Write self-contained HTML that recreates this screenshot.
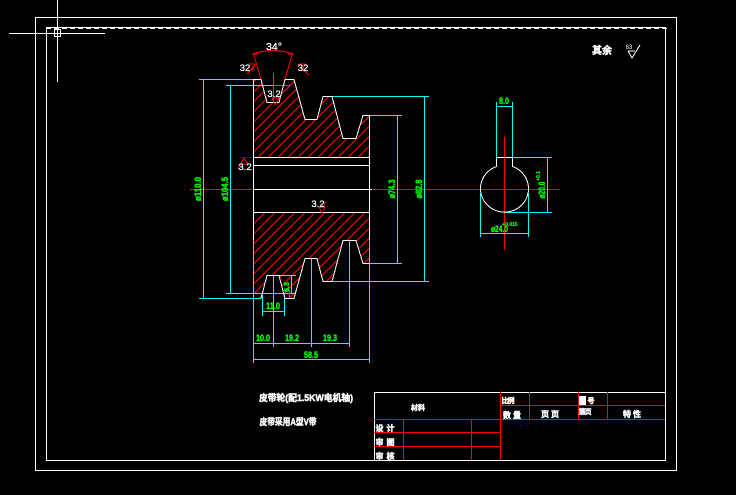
<!DOCTYPE html>
<html><head><meta charset="utf-8"><style>
html,body{margin:0;padding:0;background:#000;width:736px;height:495px;overflow:hidden}
svg{display:block}
text{font-family:"Liberation Sans","Noto Sans CJK SC",sans-serif}
.g{fill:#0f0;stroke:#0f0;stroke-width:.35;font-size:9px;font-weight:bold;text-anchor:middle}
.w{fill:#fff;stroke:#fff;stroke-width:.25;font-size:9.5px;text-anchor:middle}
.c{fill:#fff;stroke:#fff;stroke-width:.45;font-size:8px;font-weight:bold;text-anchor:middle}
</style></head><body>
<svg width="736" height="495" viewBox="0 0 736 495" xmlns="http://www.w3.org/2000/svg">
<defs>
<clipPath id="t"><polygon points="253,79 261,79 267,102 279,102 285,79 294,79 305,119 317,119 323,96 332,96 343,138 356,138 363,115 369,115 369,157 253,157"/></clipPath>
<clipPath id="b"><polygon points="253,212 369,212 369,263 363,263 356,240 343,240 332,281 323,281 317,258 305,258 294,298 285,298 279,275 267,275 261,298 253,298"/></clipPath>
<path id="hl" d="M285.5 50l-270 270m280-270l-270 270m280-270l-270 270m280-270l-270 270m280-270l-270 270m280-270l-270 270m280-270l-270 270m280-270l-270 270m280-270l-270 270m280-270l-270 270m280-270l-270 270m280-270l-270 270m280-270l-270 270m280-270l-270 270m280-270l-270 270m280-270l-270 270m280-270l-270 270m280-270l-270 270m280-270l-270 270m280-270l-270 270m280-270l-270 270m280-270l-270 270m280-270l-270 270m280-270l-270 270m280-270l-270 270m280-270l-270 270m280-270l-270 270m280-270l-270 270m280-270l-270 270m280-270l-270 270m280-270l-270 270m280-270l-270 270m280-270l-270 270m280-270l-270 270"/>
</defs>
<rect width="736" height="495" fill="#000"/>
<g shape-rendering="crispEdges" fill="none" stroke-width="1">
<!-- frames -->
<g stroke="#fff">
<path d="M35.5 17.5H676.5V470.5H35.5Z"/>
<path d="M46.5 27.5H665.5V460.5H46.5Z"/>
<path d="M46 28.5H667" stroke-dasharray="5 3"/>
<path d="M9 33.5H105M57.5 0V82"/>
<path d="M54.5 29.5H60.5V36.5H54.5Z"/>
</g>
<!-- hatching -->
<g clip-path="url(#t)"><use href="#hl" stroke="#f00"/></g>
<g clip-path="url(#b)"><use href="#hl" stroke="#f00" x="2"/></g>
<!-- centre lines -->
<g stroke="#f00">
<path d="M190 189.5H560"/>
<path d="M504.5 137V250"/>
</g>
<!-- cyan dims -->
<g stroke="#0ff">
<path d="M199 79.5H253M203.5 79V298M199 298.5H261"/>
<path d="M226 85.5H290M230.5 85V293M226 293.5H296"/>
<path d="M332 96.5H429M424.5 96V281M332 281.5H429"/>
<path d="M369 115.5H402M397.5 115V263M369 263.5H402"/>
<path d="M253.5 240V363M369.5 240V363M273.5 275V347M311.5 258V347M349.5 240V347"/>
<path d="M253 343.5H349M253 359.5H369"/>
<path d="M262.5 295V316M284.5 295V316M262 311.5H285"/>
<path d="M273 275.5H296M291.5 275V293"/>
<path d="M496.5 102V157M512.5 102V157M496 106.5H513"/>
<path d="M512 157.5H552M504 212.5H552M547.5 157V212"/>
<path d="M480.5 193V237M528.5 193V237M480 233.5H529"/>
</g>
<!-- magenta -->
<path stroke="#f0f" d="M273.5 73V102M273 85.5H290M289.5 290V299"/>
<!-- pulley outline -->
<g stroke="#fff">
<path d="M253.5 79V240M369.5 115V240"/>
<path d="M253 157.5H369M253 165.5H369M253 189.5H372M254 212.5H369"/>
<polyline points="253,79.5 261,79.5 267,102.5 279,102.5 285,79.5 294,79.5 305,119.5 317,119.5 323,96.5 332,96.5 343,138.5 356,138.5 363,115.5 369,115.5"/>
<polyline points="261,298.5 267,275.5 279,275.5 285,298.5 294,298.5 305,258.5 317,258.5 323,281.5 332,281.5 343,240.5 356,240.5 363,263.5 369,263.5"/>
<path d="M496.5 157.5H512.5M496.5 157V167M512.5 157V167"/>
<path d="M496.5 166.5A24 23.5 0 1 0 512.5 166.5"/>
</g>
<!-- red roughness and angle -->
<g stroke="#f00">
<path d="M253.5 54L261 79M292.5 54L285 79"/>
<path d="M253 54Q273 47 293 54"/>
<path d="M252 54H258M288 54H294"/>
<path d="M247 74L254 66M249 64H255L252 71M299 64H305L302 71M298 65L300 64M301 68L309 75"/>
<path d="M272 98H279L275 105L272 98M278 99L280 97"/>
<path d="M238 169L244 158L248 164H241"/>
<path d="M319 207H325L322 213L319 207M323 207L326 202"/>
</g>
<path stroke="#00f" d="M239 157.5H253M519 425.5H522"/>
<!-- table -->
<g stroke="#fff"><path d="M374.5 460V392.5H665.5"/></g>
<g stroke="#f00">
<path d="M374 419.5H665M374 432.5H500M374 446.5H500M500 405.5H665"/>
<path d="M403.5 419V460M471.5 419V460M500.5 392V460M529.5 392V419M578.5 392V419M607.5 392V419"/>
</g>
<rect x="579" y="396" width="7" height="9" fill="#fff" stroke="none"/>
<!-- roughness top right -->
<path stroke="#fff" d="M628 51L632 58L640 45M628 51H635"/>
</g>
<!-- texts -->
<text class="w" x="274" y="50" style="font-size:10.5px" textLength="16">34°</text>
<text class="w" x="245" y="71">32</text>
<text class="w" x="303" y="71">32</text>
<text class="w" x="274" y="97">3.2</text>
<text class="w" x="245" y="170">3.2</text>
<text class="w" x="318" y="207">3.2</text>
<text class="g" transform="translate(201,189) rotate(-90)" textLength="24" lengthAdjust="spacingAndGlyphs">ø110.0</text>
<text class="g" transform="translate(228,189) rotate(-90)" textLength="24" lengthAdjust="spacingAndGlyphs">ø104.5</text>
<text class="g" transform="translate(395,189) rotate(-90)" textLength="19" lengthAdjust="spacingAndGlyphs">ø74.3</text>
<text class="g" transform="translate(422,189) rotate(-90)" textLength="19" lengthAdjust="spacingAndGlyphs">ø82.8</text>
<text class="g" x="263" y="341" textLength="14" lengthAdjust="spacingAndGlyphs">10.0</text>
<text class="g" x="292" y="341" textLength="14" lengthAdjust="spacingAndGlyphs">19.2</text>
<text class="g" x="330" y="341" textLength="14" lengthAdjust="spacingAndGlyphs">19.3</text>
<text class="g" x="311" y="358" textLength="14" lengthAdjust="spacingAndGlyphs">58.5</text>
<text class="g" x="273" y="309" textLength="14" lengthAdjust="spacingAndGlyphs">11.0</text>
<text class="g" x="504" y="104" textLength="10" lengthAdjust="spacingAndGlyphs">8.0</text>
<text class="g" transform="translate(289,287) rotate(-90)" style="font-size:7px">6.3</text>
<text class="g" transform="translate(545,190) rotate(-90)" textLength="17" lengthAdjust="spacingAndGlyphs">ø20.0</text>
<text class="g" transform="translate(540,176) rotate(-90)" style="font-size:5px;stroke-width:.2">+0.1</text>
<text class="g" x="499.5" y="232" textLength="17" lengthAdjust="spacingAndGlyphs">ø24.0</text>
<text class="g" x="510" y="226" style="font-size:5px;stroke-width:.2">+0.015</text>
<text class="c" x="602" y="54" style="font-size:10px">其余</text>
<text class="w" x="629" y="49" style="font-size:6px;stroke-width:0">63</text>
<text class="c" x="306" y="401" style="font-size:9px" textLength="94" lengthAdjust="spacingAndGlyphs">皮带轮(配1.5KW电机轴)</text>
<text class="c" x="288" y="425" style="font-size:9px" textLength="57" lengthAdjust="spacingAndGlyphs">皮带采用A型V带</text>
<text class="c" x="418" y="410" style="font-size:7px">材料</text>
<text class="c" x="385" y="431" style="font-size:8px" textLength="19">设计</text>
<text class="c" x="385" y="445" style="font-size:8px" textLength="19">审图</text>
<text class="c" x="385" y="459" style="font-size:8px" textLength="19">审核</text>
<text class="c" x="508" y="403" style="font-size:7px" textLength="13">比例</text>
<text class="c" x="591" y="403" style="font-size:7px">号</text>
<text class="c" x="512" y="418" style="font-size:8px" textLength="18">数量</text>
<text class="c" x="550" y="417" style="font-size:8px" textLength="18">页页</text>
<text class="c" x="585" y="414" style="font-size:7px" textLength="13">第页</text>
<text class="c" x="632" y="417" style="font-size:8px" textLength="18">特性</text>
</svg>
</body></html>
